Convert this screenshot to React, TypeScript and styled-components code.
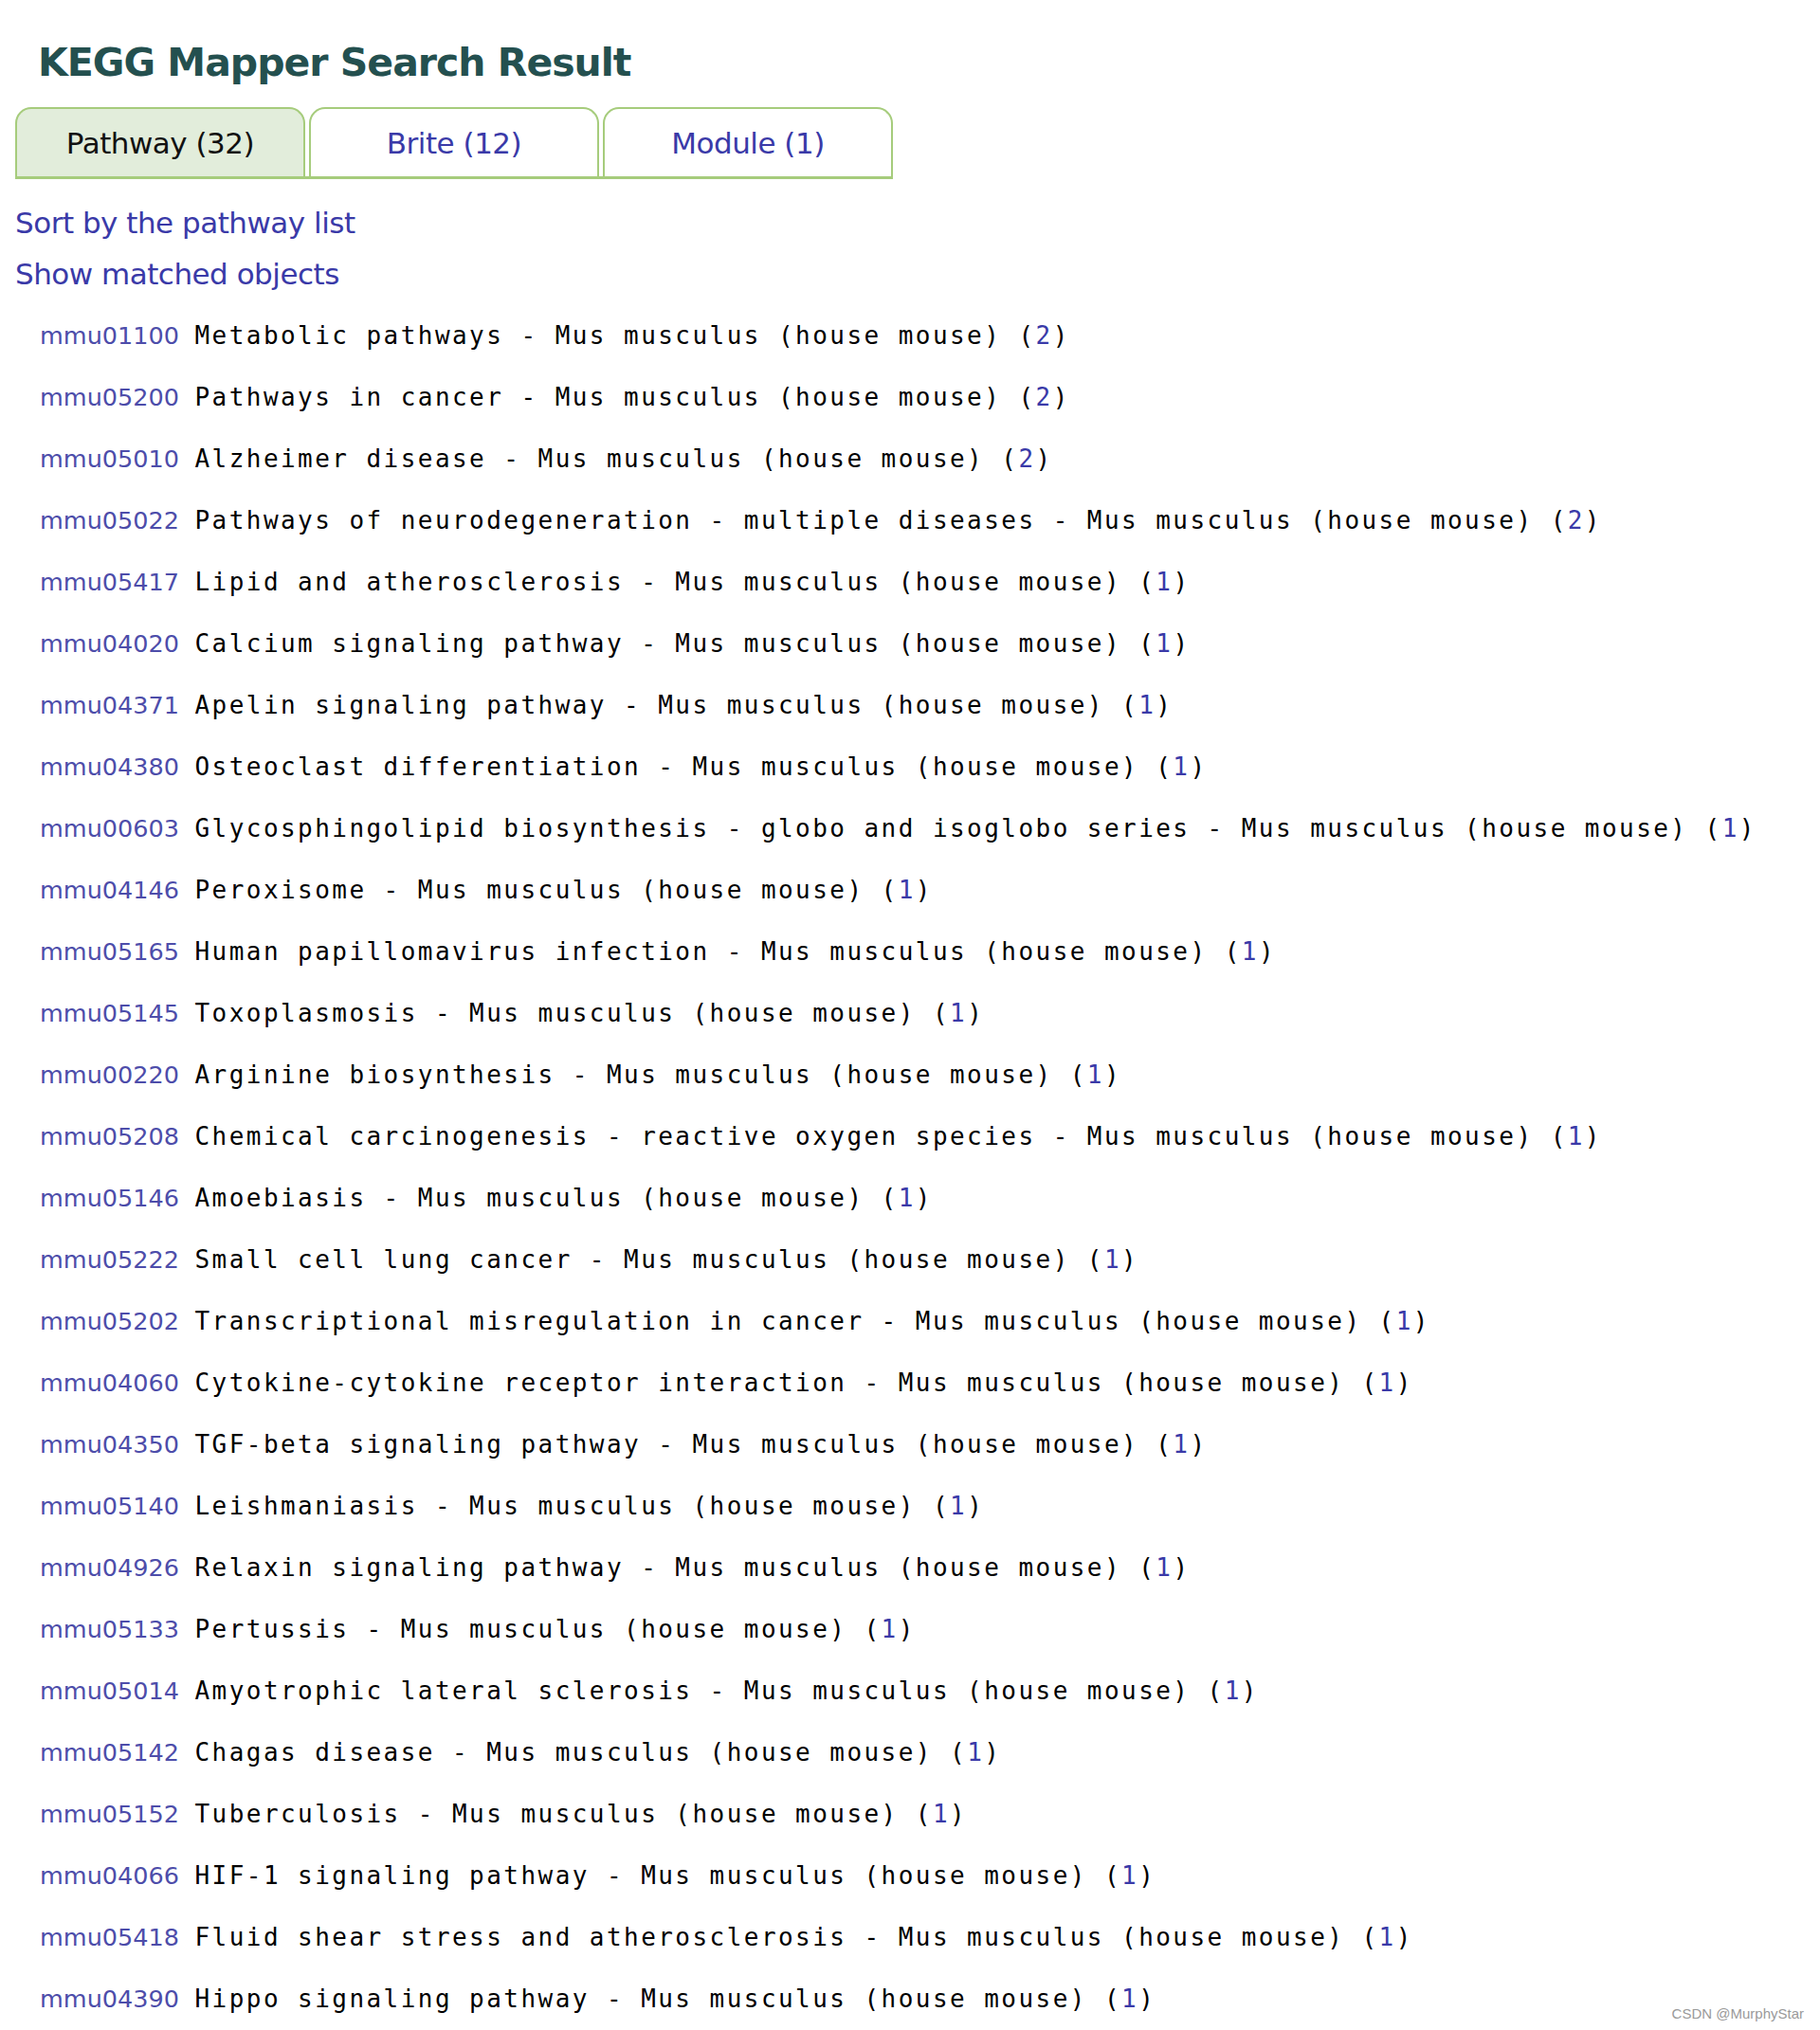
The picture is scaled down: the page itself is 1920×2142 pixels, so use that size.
import { createGlobalStyle, styled } from "styled-components";

const GlobalStyle = createGlobalStyle`
  html, body {
    margin: 0;
    padding: 0;
    background: #fff;
  }
`;

const LINK = "#3a3aa8";
const GREEN = "#a6cc7c";

const Page = styled.div`
  position: relative;
  height: 2142px;
  padding: 42px 0 0 16px;
  box-sizing: border-box;
  overflow: hidden;
  font-family: "DejaVu Sans", Verdana, sans-serif;
  color: #000;
`;

const Title = styled.h2`
  margin: 0 0 0 24px;
  font-size: 41px;
  line-height: 49px;
  font-weight: bold;
  letter-spacing: -1px;
  color: #24504f;
`;

const TabBar = styled.div`
  display: inline-flex;
  gap: 4px;
  margin-top: 22px;
  border-bottom: 3px solid ${GREEN};
`;

const Tab = styled.div<{ $active?: boolean }>`
  box-sizing: border-box;
  width: 306px;
  height: 73px;
  display: flex;
  align-items: center;
  justify-content: center;
  border: 2px solid ${GREEN};
  border-bottom: none;
  border-radius: 17px 17px 0 0;
  background: ${(p) => (p.$active ? "#e2eddb" : "#fff")};
  color: ${(p) => (p.$active ? "#111" : LINK)};
  font-size: 31px;
  letter-spacing: -0.5px;
  cursor: pointer;
`;

const LinkList = styled.div`
  margin-top: 19px;
  display: flex;
  flex-direction: column;
`;

const TextLink = styled.a`
  display: block;
  width: max-content;
  font-size: 31px;
  line-height: 54px;
  letter-spacing: -0.5px;
  color: ${LINK};
  text-decoration: none;
`;

const Results = styled.div`
  margin-top: 6px;
  padding-left: 26px;
`;

const Row = styled.div`
  font-family: "DejaVu Sans Mono", "Liberation Mono", monospace;
  font-size: 26px;
  letter-spacing: 2.45px;
  line-height: 65px;
  height: 65px;
  white-space: nowrap;
`;

const MapId = styled.a`
  font-family: "DejaVu Sans", Verdana, sans-serif;
  font-size: 25.5px;
  line-height: 1;
  letter-spacing: 0;
  color: #4d4daa;
  text-decoration: none;
  margin-right: 16.5px;
`;

const Count = styled.a`
  color: ${LINK};
  text-decoration: none;
`;

// CSDN stamp laid over the lower right corner
const Watermark = styled.div`
  position: absolute;
  right: 17px;
  bottom: 10px;
  font-family: "Liberation Sans", Arial, sans-serif;
  font-size: 15px;
  line-height: 1;
  color: #9a9a9a;
`;

type Pathway = {
  id: string;
  name: string;
  count: number;
};

const pathways: Pathway[] = [
  { id: "mmu01100", name: "Metabolic pathways", count: 2 },
  { id: "mmu05200", name: "Pathways in cancer", count: 2 },
  { id: "mmu05010", name: "Alzheimer disease", count: 2 },
  { id: "mmu05022", name: "Pathways of neurodegeneration - multiple diseases", count: 2 },
  { id: "mmu05417", name: "Lipid and atherosclerosis", count: 1 },
  { id: "mmu04020", name: "Calcium signaling pathway", count: 1 },
  { id: "mmu04371", name: "Apelin signaling pathway", count: 1 },
  { id: "mmu04380", name: "Osteoclast differentiation", count: 1 },
  { id: "mmu00603", name: "Glycosphingolipid biosynthesis - globo and isoglobo series", count: 1 },
  { id: "mmu04146", name: "Peroxisome", count: 1 },
  { id: "mmu05165", name: "Human papillomavirus infection", count: 1 },
  { id: "mmu05145", name: "Toxoplasmosis", count: 1 },
  { id: "mmu00220", name: "Arginine biosynthesis", count: 1 },
  { id: "mmu05208", name: "Chemical carcinogenesis - reactive oxygen species", count: 1 },
  { id: "mmu05146", name: "Amoebiasis", count: 1 },
  { id: "mmu05222", name: "Small cell lung cancer", count: 1 },
  { id: "mmu05202", name: "Transcriptional misregulation in cancer", count: 1 },
  { id: "mmu04060", name: "Cytokine-cytokine receptor interaction", count: 1 },
  { id: "mmu04350", name: "TGF-beta signaling pathway", count: 1 },
  { id: "mmu05140", name: "Leishmaniasis", count: 1 },
  { id: "mmu04926", name: "Relaxin signaling pathway", count: 1 },
  { id: "mmu05133", name: "Pertussis", count: 1 },
  { id: "mmu05014", name: "Amyotrophic lateral sclerosis", count: 1 },
  { id: "mmu05142", name: "Chagas disease", count: 1 },
  { id: "mmu05152", name: "Tuberculosis", count: 1 },
  { id: "mmu04066", name: "HIF-1 signaling pathway", count: 1 },
  { id: "mmu05418", name: "Fluid shear stress and atherosclerosis", count: 1 },
  { id: "mmu04390", name: "Hippo signaling pathway", count: 1 },
];

const tabs = [
  { id: 1, label: "Pathway (32)", active: true },
  { id: 2, label: "Brite (12)", active: false },
  { id: 3, label: "Module (1)", active: false },
];

const ORGANISM = "Mus musculus (house mouse)";

const App: React.FC = () => {
  return (
    <>
      <GlobalStyle />
      <Page>
        <Title>KEGG Mapper Search Result</Title>
        <TabBar>
          {tabs.map((t) => (
            <Tab key={t.id} $active={t.active}>
              {t.label}
            </Tab>
          ))}
        </TabBar>
        <LinkList>
          <TextLink href="#">Sort by the pathway list</TextLink>
          <TextLink href="#">Show matched objects</TextLink>
        </LinkList>
        <Results>
          {pathways.map((p) => (
            <Row key={p.id}>
              <MapId href="#">{p.id}</MapId>
              {`${p.name} - ${ORGANISM} (`}
              <Count href="#">{p.count}</Count>)
            </Row>
          ))}
        </Results>
        <Watermark>CSDN @MurphyStar</Watermark>
      </Page>
    </>
  );
};

export default App;
